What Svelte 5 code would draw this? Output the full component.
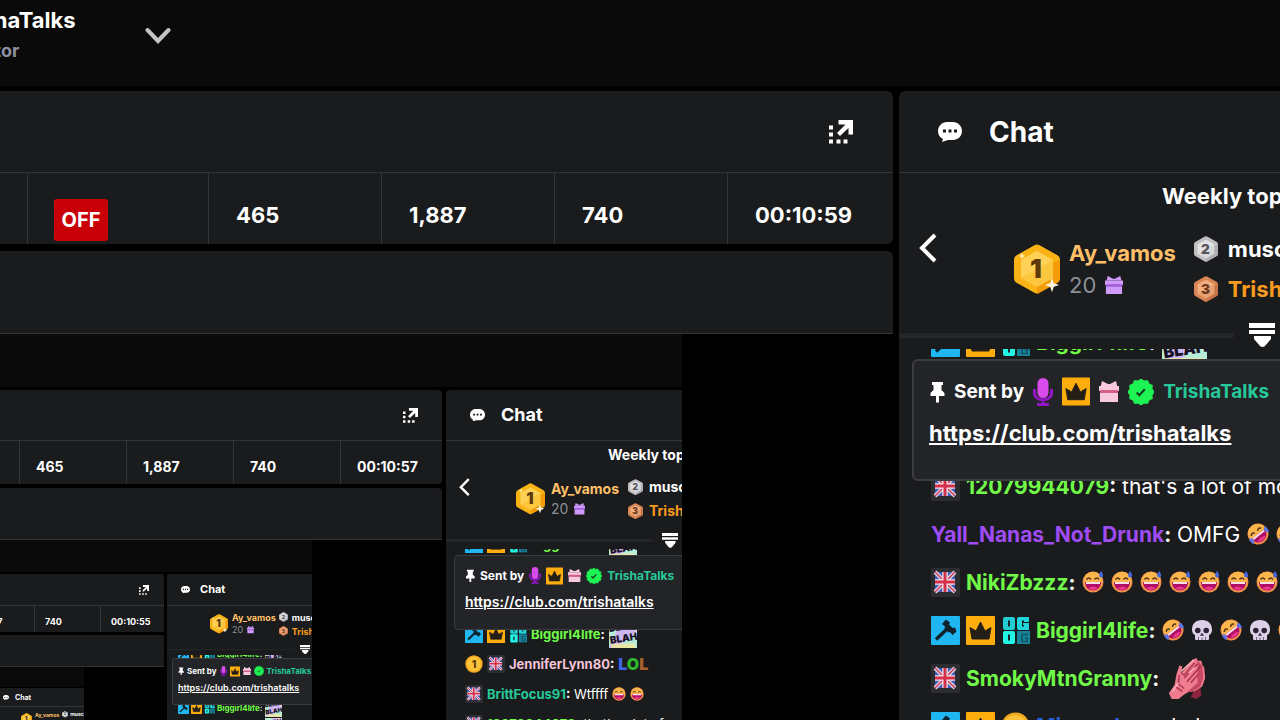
<script>
  const star = Array.from({ length: 24 }, (_, i) => {
    const r = i % 2 ? 10.4 : 12;
    const a = (i * Math.PI) / 12;
    return `${12 + r * Math.sin(a)},${12 - r * Math.cos(a)}`;
  }).join(' ');

  const biggirl = { badges: ['gavel', 'crown', 'og'], name: 'Biggirl4life', tone: 'lime' };
  const m = {
    blah: { ...biggirl, emotes: ['blah'] },
    jennifer: { badges: ['coin', 'flag'], name: 'JenniferLynn80', tone: 'rose', lol: true },
    britt: { badges: ['flag'], name: 'BrittFocus91', tone: 'teal', text: 'Wtffff', emotes: ['grin', 'grin'] },
    lot: { badges: ['flag'], name: '12079944079', tone: 'lime', text: "that's a lot of money" },
    yall: { badges: [], name: 'Yall_Nanas_Not_Drunk', tone: 'violet', text: 'OMFG', emotes: ['rofl', 'rofl'] },
    niki: { badges: ['flag'], name: 'NikiZbzzz', tone: 'lime', emotes: Array(7).fill('sweat') },
    skulls: { ...biggirl, emotes: ['rofl', 'skull', 'rofl', 'skull', 'rofl'] },
    smoky: { badges: ['flag'], name: 'SmokyMtnGranny', tone: 'lime', emotes: ['hands'] },
    mia: { badges: ['gavel', 'crown', 'coin'], name: 'Miamorlona', tone: 'blue', text: 'haha' }
  };

  const levels = [
    { time: '00:10:59', rows: [m.blah, m.jennifer, m.britt, m.lot, m.yall, m.niki, m.skulls, m.smoky, m.mia] },
    { time: '00:10:57', rows: [m.blah, m.yall, m.niki, m.blah, m.jennifer, m.britt, m.lot] },
    { time: '00:10:55', rows: [m.blah, m.yall, m.niki, m.blah, m.blah] },
    { time: '00:10:53', rows: [] }
  ];
</script>

{#snippet gift(box, band)}
  <svg class="gift" viewBox="0 0 20 21" aria-hidden="true">
    <path d="M3 0l6 3h2l6-3 1 4v1H2V4z" fill={box} />
    <path d="M0 5h20v5H0zM1 11h18v10H1z" fill={box} />
    <path d="M1 9h18v3H1z" fill={band} />
  </svg>
{/snippet}

{#snippet hex(n, dark, edge, light, ink)}
  <svg viewBox="0 0 46 50" aria-hidden="true">
    <path d="M20 1.500q3-2 6 0L43 11q3 1.500 3 5v18q0 3.500-3 5l-17 9.500q-3 2-6 0L3 39q-3-1.500-3-5V16q0-3.500 3-5z" fill={edge} />
    <path d="M23 50q1.500 0 3-1.500L43 39q3-1.500 3-5V16L23 25z" fill={dark} opacity=".6" />
    <path d="M23 7l16 9v18l-16 9-16-9V16z" fill={light} />
    <path d="M39 16v18l-16 9-16-9z" fill={edge} opacity=".35" />
    <text x="22" y="34" text-anchor="middle" font-size="26" font-weight="900" fill={ink}>{n}</text>
    {#if n === 1}
      <path d="M38 37l1 3 3 1-3 1-1 3-1-3-3-1 3-1z" fill="#fff7dd" stroke="#fff7dd" stroke-width="2" />
      <path d="M8 9l1 2 2 1-2 1-1 2-1-2-2-1 2-1z" fill="#fff3b8" />
    {/if}
  </svg>
{/snippet}

{#snippet badge(kind)}
  <svg class="badge" viewBox="0 0 29 29" aria-hidden="true">
    {#if kind === 'flag'}
      <rect width="29" height="29" rx="1" fill="#2c2d31" />
      <rect x="4" y="4" width="20" height="20" fill="#3c57b4" />
      <path d="M4 4l20 20M24 4L4 24" stroke="#d9d4ea" stroke-width="4" />
      <path d="M4 4l20 20M24 4L4 24" stroke="#d43c58" stroke-width="1.500" />
      <path d="M14 4v20M4 14h20" stroke="#f0e4ee" stroke-width="5.500" />
      <path d="M14 4v20M4 14h20" stroke="#d52f49" stroke-width="3" />
    {:else if kind === 'gavel'}
      <rect width="29" height="29" rx="1" fill="#1fb6f2" />
      <path d="M5 23.500L16 13" stroke="#10222c" stroke-width="3.500" />
      <path d="M15 3.500l4 3-1 2 3.500 3.500 2.500-.5 1.500 4-4 3.500-2.500-3-1.500.5-4-4 .5-2-3-2.500z" fill="#10222c" />
    {:else if kind === 'crown'}
      <rect width="29" height="29" rx="1" fill="#ffad0d" />
      <path d="M4 11.500l6 3.500 4.500-9L19 15l6-3.500-2 11.500H6z" fill="#241f16" stroke="#241f16" stroke-linejoin="round" />
    {:else if kind === 'og'}
      <path d="M4 1h8q2 0 2 2v9q0 2-2 2H4q-2 0-2-2V3q0-2 2-2z" fill="#1fcdd2" />
      <path d="M18 1h10v5h-5V4.500h-2v6h2V9h-1V7h6v7H18q-2 0-2-2V3q0-2 2-2z" fill="#1fd6dc" />
      <path d="M4 15h8q2 0 2 2v9q0 2-2 2H4q-2 0-2-2v-9q0-2 2-2z" fill="#23f5e5" />
      <path d="M16 15h13v13H16z" fill="#17839b" />
      <path d="M7 4.500h2v6H7zM7 18.500h2v6H7z" fill="#152529" />
      <path d="M27 18.500h-6v7h5V22h-2" fill="none" stroke="#125062" stroke-width="1.500" />
    {:else}
      <circle cx="14.500" cy="14.500" r="14" fill="#f2a91c" />
      <circle cx="14.500" cy="14.500" r="11.500" fill="#fcc33a" />
      <text x="14.500" y="20.500" text-anchor="middle" font-size="17" font-weight="800" fill="#5b3906">1</text>
    {/if}
  </svg>
{/snippet}

{#snippet emote(kind)}
  {#if kind === 'blah'}
    <svg class="blah" viewBox="0 0 45 45" aria-label="BLAH">
      <rect width="45" height="45" fill="#cdb6f2" />
      <path d="M0 0h20L0 45zM45 20v25H10z" fill="#b7ecd8" />
      <path d="M30 0h15v22z" fill="#f4d7ea" />
      <path d="M4 38h38v7H4z" fill="#f5e59a" opacity=".8" />
      <g font-size="16" font-weight="900" fill="#171024" transform="rotate(-9 22 22)">
        <text x="1" y="16">BLAH</text>
        <text x="0" y="35">BLAH</text>
      </g>
    </svg>
  {:else if kind === 'hands'}
    <svg class="hands" viewBox="0 0 40 44" aria-hidden="true">
      <path d="M27 36l7-4 1 8-5 4-6-2z" fill="#8f2440" />
      <path d="M1 38L7 29 9 18l3-9 3 1-1 7L26 3l4-2 1 3 4 0 1 4 2 3 1 11-3 9-8 5-7 1-5 3-6 5-6-1z" fill="#ef7c8f" />
      <path d="M31 4l5 5 1 13-3 9-8 5-6 1 11-10z" fill="#c64964" />
      <path d="M14 17l3 2L28 6M17 22L31 7M20 26L34 10M12 19l-1 9 6 5M8 31l7 5M24 27l8-9" fill="none" stroke="#a93450" stroke-width="1.500" />
      <path d="M14 15L27 3M11 27l-6 9M22 17l6-6" fill="none" stroke="#ffb4bd" stroke-width="1.500" />
    </svg>
  {:else}
    <svg class="emoji" viewBox="0 0 22 22" aria-hidden="true">
      {#if kind === 'skull'}
        <path d="M11 1C4.500 1 1 5 1 10.500c0 3 1 4.500 3 5.500v4q0 1 1.200 1H17q1 0 1-1v-4c2-1 3-2.500 3-5.500C21 5 17.500 1 11 1z" fill="#dccfe8" />
        <circle cx="6.800" cy="11.500" r="2.800" fill="#2b2133" /><circle cx="15.200" cy="11.500" r="2.800" fill="#2b2133" />
        <path d="M11 14l1.500 2.500h-3zM7.500 18v3M11 18.500V21M14.500 18v3" fill="#2b2133" stroke="#57465f" stroke-width=".8" />
      {:else}
        <g transform={kind === 'rofl' ? 'rotate(-38 11 11)' : undefined}>
          <circle cx="11" cy="11" r="10.500" fill="#f28f4a" />
          <circle cx="11" cy="10" r="9.200" fill="#fbb54b" />
          <path d="M3 11h16c0 5.500-3.500 8.500-8 8.500S3 16.500 3 11z" fill="#b00d66" />
          <path d="M4 11h14v2H4z" fill="#f7dfea" />
          <path d="M6 17.200q5-3.500 10 0-5 3.500-10 0z" fill="#e8388c" />
          <path d="M4.500 8.500q2.300-3 4.500 0M12.500 8.500q2.300-3 4.500 0" fill="none" stroke="#54301b" stroke-width="1.500" />
          {#if kind === 'sweat'}
            <path d="M19 0c-2 3-3 6 0 6.500 3-.5 2.500-3.500 0-6.500z" fill="#4667dc" />
          {:else if kind === 'rofl'}
            <path d="M1.500 9q-2.500 5 0 7 2.500-1 2-5zM20.500 9q2.500 5 0 7-2.500-1-2-5z" fill="#5c77ec" />
          {/if}
        </g>
      {/if}
    </svg>
  {/if}
{/snippet}

{#snippet screen(level)}
  {@const data = levels[level]}
  <div class="screen l{level}">
    <header class="bar">
      {#if level === 0}
        <div class="identity">
          <strong>TrishaTalks</strong>
          <span>Creator</span>
        </div>
        <button class="drop" aria-label="Switch account">
          <svg viewBox="0 0 26 18" aria-hidden="true"><path d="M2.500 3L13 14 23.500 3" fill="none" stroke="#c4c4c4" stroke-width="4" stroke-linecap="round" /></svg>
        </button>
      {/if}
    </header>
    <div class="columns">
      {#if level < 3}
        <main class="left">
          <section class="panel">
            <div class="head end">
              <button aria-label="Open in new window">
                <svg class="pop" viewBox="0 0 24 24" aria-hidden="true">
                  <path d="M9.500 0H24v14.500h-4.500V8L11 16l-3-3 8.500-8.500h-7zM0 5.500h4v4H0zM0 12.500h4v4H0zM0 19.500h4v4H0zM7.500 19.500h4v4h-4zM14.500 19.500h4v4h-4z" fill="#fff" />
                </svg>
              </button>
            </div>
            <div class="stats">
              {#if level === 0}<div class="cell wide"><button class="off">OFF</button></div>{/if}
              <div class="cell">465</div>
              <div class="cell">1,887</div>
              <div class="cell">740</div>
              <div class="cell last">{data.time}</div>
            </div>
          </section>
          <section class="panel sub"></section>
          <section class="stage">
            {@render screen(level + 1)}
          </section>
        </main>
      {/if}
      <aside class="panel chat">
        <div class="head title">
          <svg class="bubble" viewBox="0 0 24 20" aria-hidden="true">
            <path d="M9 0h6c5 0 9 4 9 9s-4 9-9 9h-5l-6 2 1-3C2 15.500 0 13 0 9c0-5 4-9 9-9z" fill="#fff" />
            <path d="M5 7.500h3v3H5zM10.500 7.500h3v3h-3zM16 7.500h3v3h-3z" fill="#1a1b1d" />
          </svg>
          <h2>Chat</h2>
        </div>
        <div class="gifters">
          <button class="back" aria-label="Previous">
            <svg viewBox="0 0 18 30" aria-hidden="true"><path d="M16 2L3 15l13 13" fill="none" stroke="#fff" stroke-width="4" /></svg>
          </button>
          <div class="board">
            {#if level < 2}<h3>Weekly top gifters</h3>{/if}
            <div class="ranks">
              <div class="medal">{@render hex(1, '#f08a00', '#f9b314', '#ffd257', '#5e3a0b')}</div>
              <div class="first">
                <b>Ay_vamos</b>
                <span>20 {@render gift('#d09afa', '#a35fe0')}</span>
              </div>
              <ul>
                <li>{@render hex(2, '#a2a2a6', '#bfbfc2', '#e3e3e4', '#55555a')}<b>muscle</b></li>
                <li class="third">{@render hex(3, '#bd6a3f', '#d88656', '#f2ae80', '#6e3a20')}<b>Trisha</b></li>
              </ul>
            </div>
          </div>
        </div>
        <div class="divider">
          <i></i>
          <svg viewBox="0 0 26 24" aria-hidden="true"><path d="M0 0h26v5H0zM0 7h26v4H0zM5 13h17v3l-6 7q-2.500 2-5 0l-6-7z" fill="#fff" /></svg>
        </div>
        <div class="feed">
          <ul class="messages">
            {#each data.rows as row}
              <li>
                {#each row.badges as b}{@render badge(b)}{/each}
                <span><b class={row.tone}>{row.name}</b><b>:</b>{#if row.text}{' ' + row.text}{/if}</span>
                {#if row.lol}<b class="lol"><i>L</i><i>O</i><i>L</i></b>{/if}
                {#if row.emotes}<span class="emotes">{#each row.emotes as e}{@render emote(e)}{/each}</span>{/if}
              </li>
            {/each}
          </ul>
          {#if level < 3}
            <div class="pinned">
              <div class="sent">
                <svg class="pin" viewBox="0 0 16 22" aria-hidden="true"><path d="M3 1h11v3h-1.500v5l3 3v3H10v6.500H7V15H1.500v-3l3-3V4H3z" fill="#fff" /></svg>
                <b>Sent by</b>
                <svg class="mic" viewBox="0 0 20 28" aria-hidden="true">
                  <path d="M1.500 11v4c0 9 17 9 17 0v-4M10 21v5M4 26.500h12" fill="none" stroke="#9216c4" stroke-width="3" />
                  <rect x="4.500" y="0" width="11" height="20" rx="5.500" fill="#d64bea" />
                </svg>
                {@render badge('crown')}
                {@render gift('#f8c9de', '#d65f86')}
                <svg class="check" viewBox="0 0 24 24" aria-hidden="true">
                  <polygon points={star} fill="#1df352" stroke="#1df352" stroke-linejoin="round" />
                  <path d="M8 12.500l2.500 2.500 5-5.500" fill="none" stroke="#123d20" stroke-width="2" />
                </svg>
                <b class="teal">TrishaTalks</b>
              </div>
              <a href="https://club.com/trishatalks">https://club.com/trishatalks</a>
            </div>
          {/if}
        </div>
      </aside>
    </div>
  </div>
{/snippet}

<div class="app">{@render screen(0)}</div>

<style>
  :global(body) { background: #000; }
  .app { height: 100vh; display: grid; overflow: hidden; color: #fff; font-family: Inter, "Liberation Sans", sans-serif; }
  h2, h3, ul { margin: 0; padding: 0; list-style: none; }
  svg { display: block; flex: none; }
  button { display: block; border: 0; padding: 0; background: none; color: inherit; font: inherit; }

  .l0 {
    --bar: 86px; --top: 5px; --head: 81px; --stats: 71px; --gap: 7px; --sub: 82px; --col: 6px;
    --chat: 381px; --cell: 173px; --last: 166px; --inset: 27px; --drop: 12px; --letter: 211px; --radius: 6px;
    --text: 22px; --msg: 21px; --sent-text: 19px; --title: 28px; --pop: 24px; --pop-end: 40px; --bub: 24px; --bub-in: 39px; --bub-gap: 27px;
    --board: 150px; --back: 18px; --back-in: 20px; --board-gap: 77px; --week: 47px; --week-in: 148px; --medal: 46px; --small: 24px;
    --name-gap: 9px; --list-gap: 18px; --rank-row: 40px; --first-row: 32px; --small-gap: 10px;
    --funnel: 26px; --funnel-h: 24px; --funnel-end: 5px; --line: 5px; --line-gap: 15px; --clip: 2px;
    --row: 48px; --shift: -31px; --msg-in: 32px; --badge: 29px; --tight: 6px; --emoji: 22px; --egap: 7px; --epad: 1px; --blah: 45px; --hands: 42px; --lol: 26px;
    --pin-top: 10px; --pin-in: 13px; --pin-h: 122px; --pin-pad: 15px; --sent: 31px; --pin-w: 16px; --mic: 20px; --gift: 20px; --gift-sm: 18px; --check: 26px; --sgap: 9px; --bw: 2px; --link-weight: 700;
  }
  .l1 {
    --bar: 53px; --top: 3px; --head: 50px; --stats: 43px; --gap: 4px; --sub: 51px; --col: 4px;
    --chat: 236px; --cell: 107px; --last: 102px; --inset: 16px; --drop: 8px; --letter: 130px; --radius: 4px;
    --text: 14px; --msg: 13px; --sent-text: 12px; --title: 18px; --pop: 15px; --pop-end: 24px; --bub: 15px; --bub-in: 24px; --bub-gap: 16px;
    --board: 92px; --back: 11px; --back-in: 13px; --board-gap: 46px; --week: 28px; --week-in: 92px; --medal: 29px; --small: 15px;
    --name-gap: 6px; --list-gap: 9px; --rank-row: 24px; --first-row: 20px; --small-gap: 6px;
    --funnel: 16px; --funnel-h: 15px; --funnel-end: 4px; --line: 3px; --line-gap: 9px; --clip: 1px;
    --row: 30px; --shift: -20px; --msg-in: 19px; --badge: 18px; --tight: 4px; --emoji: 14px; --egap: 4px; --epad: 0px; --blah: 28px; --hands: 26px; --lol: 16px;
    --pin-top: 6px; --pin-in: 8px; --pin-h: 75px; --pin-pad: 10px; --sent: 19px; --pin-w: 10px; --mic: 12px; --gift: 13px; --gift-sm: 11px; --check: 16px; --sgap: 5px; --bw: 1px; --link-weight: 600;
  }
  .l2 {
    --bar: 32px; --top: 2px; --head: 31px; --stats: 26px; --gap: 3px; --sub: 31px; --col: 3px;
    --chat: 145px; --cell: 66px; --last: 64px; --inset: 10px; --drop: 4px; --letter: 80px; --radius: 2px;
    --text: 9px; --msg: 8px; --sent-text: 8px; --title: 11px; --pop: 10px; --pop-end: 15px; --bub: 9px; --bub-in: 14px; --bub-gap: 10px;
    --board: 39px; --back: 0px; --back-in: 14px; --board-gap: 29px; --week: 0px; --week-in: 0px; --medal: 18px; --small: 9px;
    --name-gap: 4px; --list-gap: 3px; --rank-row: 14px; --first-row: 12px; --small-gap: 4px;
    --funnel: 10px; --funnel-h: 9px; --funnel-end: 2px; --line: 1px; --line-gap: 6px; --clip: 1px;
    --row: 18px; --shift: -10px; --msg-in: 11px; --badge: 11px; --tight: 2px; --emoji: 9px; --egap: 3px; --epad: 1px; --blah: 17px; --hands: 16px; --lol: 10px;
    --pin-top: 3px; --pin-in: 5px; --pin-h: 47px; --pin-pad: 5px; --sent: 14px; --pin-w: 6px; --mic: 7px; --gift: 8px; --gift-sm: 7px; --check: 10px; --sgap: 3px; --bw: 1px; --link-weight: 600;
  }
  .l3 {
    --bar: 20px; --top: 1px; --head: 18px; --chat: 84px; --col: 0px; --radius: 0px;
    --text: 5px; --msg: 5px; --title: 7px; --bub: 6px; --bub-in: 3px; --bub-gap: 6px;
    --board: 24px; --back: 0px; --back-in: 8px; --board-gap: 13px; --week: 0px; --week-in: 0px; --medal: 11px; --small: 6px;
    --name-gap: 3px; --list-gap: 3px; --rank-row: 9px; --first-row: 8px; --small-gap: 2px; --gift: 4px; --gift-sm: 4px;
    --funnel: 6px; --funnel-h: 6px; --funnel-end: 2px; --line: 1px; --line-gap: 4px; --clip: 1px;
  }

  .screen { display: flex; flex-direction: column; min-width: 0; min-height: 0; overflow: hidden; background: #000; font-size: var(--text); line-height: 1; }
  .bar { flex: none; height: var(--bar); display: flex; align-items: flex-start; background: #0a0a0a; }
  .identity { display: grid; gap: 11px; margin: 9px 0 0 -47px; width: 192px; }
  .identity strong { font-size: 22px; }
  .identity span { font-size: 18px; font-weight: 700; color: #8d91a0; }
  .drop { margin-top: 27px; }
  .drop svg { width: 26px; height: 18px; }
  .columns { flex: 1; min-height: 0; display: flex; gap: var(--col); padding-top: var(--top); }
  .left { flex: 1; min-width: 0; display: flex; flex-direction: column; }
  .panel { flex: none; overflow: hidden; background: #1a1b1d; border-radius: 0 var(--radius) var(--radius) 0; }
  .head { height: var(--head); display: flex; align-items: center; border-bottom: 1px solid #333436; }
  .end { justify-content: flex-end; padding-right: var(--pop-end); }
  .pop { width: var(--pop); height: var(--pop); }
  .stats { height: var(--stats); display: flex; justify-content: flex-end; overflow: hidden; font-weight: 700; }
  .cell { box-sizing: border-box; flex: none; width: var(--cell); display: flex; align-items: center; padding: var(--drop) 0 0 var(--inset); border-left: 1px solid #333436; }
  .cell.wide { width: 181px; padding: 22px 0 0 26px; }
  .cell.last { width: var(--last); }
  .off { width: 54px; height: 42px; border-radius: 3px; background: #c90007; font-size: 20px; font-weight: 700; }
  .sub { height: var(--sub); margin-top: var(--gap); border-bottom: 1px solid #333436; border-radius: 0 var(--radius) 0 0; }
  .stage { flex: 1; min-height: 0; display: grid; grid-template-columns: minmax(0, 1fr); padding-right: var(--letter); background: #000; }

  .chat { width: var(--chat); display: flex; flex-direction: column; border-radius: var(--radius) 0 0 0; }
  .title { flex: none; gap: var(--bub-gap); padding-left: var(--bub-in); }
  .bubble { width: var(--bub); }
  h2 { font-size: var(--title); font-weight: 700; }
  .gifters { flex: none; height: var(--board); display: flex; align-items: center; gap: var(--board-gap); padding-left: var(--back-in); overflow: hidden; white-space: nowrap; }
  .back, .back svg { width: var(--back); }
  .board { align-self: stretch; }
  h3 { height: var(--week); padding-left: var(--week-in); font-size: var(--text); line-height: var(--week); }
  .ranks { display: flex; align-items: center; padding-top: var(--name-gap); }
  .medal svg { width: var(--medal); }
  .first { margin-left: var(--name-gap); line-height: var(--first-row); }
  .first b { display: block; color: #ffc069; }
  .first span { display: flex; align-items: center; gap: var(--name-gap); color: #8b8f98; }
  .gift { width: var(--gift); }
  .first .gift { width: var(--gift-sm); }
  .ranks ul { margin-left: var(--list-gap); }
  .ranks li { display: flex; align-items: center; gap: var(--small-gap); height: var(--rank-row); }
  .ranks li svg { width: var(--small); }
  .third b { color: #f79a1e; }
  .divider { flex: none; height: var(--funnel-h); display: flex; align-items: center; gap: var(--line-gap); padding-right: var(--funnel-end); margin-bottom: var(--clip); }
  .divider i { flex: 1; height: var(--line); background: #252628; border-radius: 0 2px 2px 0; }
  .divider svg { width: var(--funnel); }
  .feed { position: relative; flex: 1; min-height: 0; overflow: hidden; }
  .messages { margin-top: var(--shift); padding-left: var(--msg-in); font-size: var(--msg); }
  .messages li { height: var(--row); display: flex; align-items: center; gap: var(--tight); white-space: nowrap; }
  .badge { width: var(--badge); height: var(--badge); }
  .emotes { display: flex; align-items: center; gap: var(--egap); padding-left: var(--epad); }
  .emoji { width: var(--emoji); height: var(--emoji); }
  .blah { width: var(--blah); height: var(--blah); }
  .hands { width: var(--hands); height: var(--hands); }
  .lime { color: #71fb48; }
  .rose { color: #f5c3d8; }
  .teal { color: #27c99a; }
  .violet { color: #a04cf5; }
  .blue { color: #285fe0; }
  .lol { padding-left: var(--epad); font-size: var(--lol); }
  .lol i { font-style: normal; font-weight: 900; color: #3e65e5; }
  .lol i:nth-child(2) { color: #2fb52f; }
  .lol i:nth-child(3) { color: #a9622c; }
  .pinned { position: absolute; box-sizing: border-box; top: var(--pin-top); left: var(--pin-in); right: -9px; height: var(--pin-h); padding: var(--pin-pad) 0 0 var(--pin-pad); overflow: hidden; border: var(--bw) solid #3c3d40; border-radius: var(--radius); background: #232427; white-space: nowrap; }
  .sent { display: flex; align-items: center; gap: var(--sgap); height: var(--sent); margin-bottom: var(--pin-pad); font-size: var(--sent-text); }
  .pin { width: var(--pin-w); }
  .mic { width: var(--mic); }
  .check { width: var(--check); }
  .pinned .badge { width: calc(var(--badge) - 1px); }
  .pinned a { font-weight: var(--link-weight); color: #fff; }
</style>
